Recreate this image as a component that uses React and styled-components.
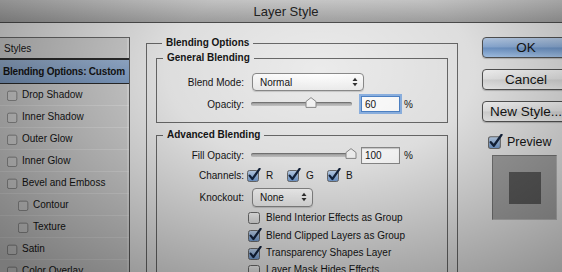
import React from "react";
import styled, { createGlobalStyle } from "styled-components";

const GlobalStyle = createGlobalStyle`
  html, body { margin: 0; padding: 0; }
  body {
    width: 562px;
    height: 272px;
    overflow: hidden;
    background: #8a8a8a;
    font-family: "Liberation Sans", Arial, sans-serif;
    font-size: 10px;
    color: #151515;
  }
`;

const Window = styled.div`
  position: relative;
  width: 562px;
  height: 272px;
  overflow: hidden;
  display: flex;
  flex-direction: column;
  background: #ebebeb;
`;

// lighting falloff of the photographed screen, lies over everything
const Vignette = styled.div`
  position: absolute;
  inset: 0;
  pointer-events: none;
  background: radial-gradient(
    ellipse 440px 270px at 320px 70px,
    rgba(0, 0, 0, 0) 0%,
    rgba(0, 0, 0, 0.06) 35%,
    rgba(0, 0, 0, 0.42) 100%
  );
`;

const TitleBar = styled.div`
  height: 22px;
  flex-shrink: 0;
  border-bottom: 1px solid #4e4e4e;
  background: linear-gradient(#cecece, #a4a4a4);
  display: flex;
  align-items: center;
  justify-content: center;
  padding-left: 10px;
  font-size: 13px;
  color: #222;
`;

const Content = styled.div`
  flex: 1;
  min-height: 0;
  display: flex;
  align-items: flex-start;
  padding-top: 14px;
`;

const Sidebar = styled.div`
  width: 129px;
  flex-shrink: 0;
  height: 300px;
  border-top: 1px solid #6a6a6a;
  border-right: 1px solid #5e5e5e;
  box-shadow: inset -2px 0 0 rgba(255, 255, 255, 0.3);
  background: #d2d2d2;
  white-space: nowrap;
`;

const SidebarHeader = styled.div`
  height: 20px;
  display: flex;
  align-items: center;
  padding-left: 4px;
  border-bottom: 2px solid #2c2c2c;
`;

const StyleRow = styled.div`
  height: ${(p) => (p.$selected ? 23 : 21)}px;
  display: flex;
  align-items: center;
  gap: 3px;
  padding-left: ${(p) => (p.$selected ? 3 : p.$indent ? 18 : 7)}px;
  font-weight: ${(p) => (p.$selected ? "bold" : "normal")};
  letter-spacing: ${(p) => (p.$selected ? "-0.2px" : "0")};
  background: ${(p) =>
    p.$selected ? "linear-gradient(#9bb4d4, #819fc6)" : "transparent"};
  border-bottom: 1px solid
    ${(p) => (p.$selected ? "#2a2a2a" : "rgba(255,255,255,0.3)")};
`;

const Main = styled.div`
  margin-left: 16px;
  width: 312px;
  flex-shrink: 0;
`;

const Group = styled.fieldset`
  margin: ${(p) => p.$margin || "0"};
  min-width: 0;
  border: 1px solid #6a6a6a;
  padding: ${(p) => p.$pad};
`;

const Legend = styled.legend`
  font-weight: bold;
  font-size: 10px;
  line-height: 12px;
  padding: 0 4px;
  margin-left: ${(p) => p.$indent}px;
`;

const FieldRow = styled.div`
  display: grid;
  grid-template-columns: 87px auto;
  column-gap: 7px;
  align-items: center;
  height: ${(p) => p.$h}px;
`;

const FieldLabel = styled.span`
  text-align: right;
`;

const Controls = styled.div`
  display: flex;
  align-items: center;
`;

const Select = styled.div`
  box-sizing: border-box;
  width: ${(p) => p.$w}px;
  height: ${(p) => p.$h || 18}px;
  margin-left: 1px;
  display: flex;
  align-items: center;
  justify-content: space-between;
  padding: 0 5px 0 7px;
  border: 1px solid #8a8a8a;
  border-radius: 4px;
  background: linear-gradient(#ffffff, #ededed);
  box-shadow: 0 1px 1px rgba(0, 0, 0, 0.15);
`;

const Track = styled.div`
  position: relative;
  width: 101px;
  height: 4px;
  border-radius: 2px;
  background: linear-gradient(#9c9c9c, #c8c8c8);
  box-shadow: inset 0 1px 1px rgba(0, 0, 0, 0.3);
`;

const Thumb = styled.svg`
  position: absolute;
  top: -5px;
`;

const NumberBox = styled.div`
  box-sizing: border-box;
  width: 39px;
  height: ${(p) => (p.$focused ? 16 : 17)}px;
  margin-left: 9px;
  padding-left: 3px;
  display: flex;
  align-items: center;
  background: #fff;
  border: 1px solid ${(p) => (p.$focused ? "#4f84c8" : "#8c8c8c")};
  box-shadow: ${(p) =>
    p.$focused
      ? "0 0 0 2px rgba(110, 160, 225, 0.75)"
      : "inset 0 1px 1px rgba(0,0,0,0.2)"};
`;

const Percent = styled.span`
  margin-left: 4px;
`;

const Channel = styled.label`
  width: 40px;
  display: flex;
  align-items: center;
  gap: 5px;
  margin-left: ${(p) => (p.$first ? -4 : 0)}px;
`;

const CheckRow = styled.div`
  height: ${(p) => p.$h}px;
  display: flex;
  align-items: center;
  gap: 4px;
  padding-left: 91px;
  white-space: nowrap;
`;

const Side = styled.div`
  margin-left: 24px;
  width: 88px;
  flex-shrink: 0;
  display: flex;
  flex-direction: column;
`;

const Button = styled.button`
  box-sizing: border-box;
  width: 88px;
  height: 21px;
  margin: 0 0 11px 0;
  padding: 0;
  border: 1px solid #555;
  border-radius: 4px;
  font-family: inherit;
  font-size: 13.5px;
  color: #151515;
  white-space: nowrap;
  background: ${(p) =>
    p.$primary
      ? "linear-gradient(#bcd2ee 0%, #8eb0dc 48%, #7199cd 52%, #a9c9ef 100%)"
      : "linear-gradient(#fdfdfd 0%, #ececec 48%, #dddddd 52%, #f3f3f3 100%)"};
  box-shadow: 0 1px 1px rgba(0, 0, 0, 0.2);
`;

const PreviewRow = styled.label`
  display: flex;
  align-items: center;
  gap: 4px;
  margin: 2px 0 0 6px;
  height: 13px;
  font-size: 12.5px;
`;

const PreviewBox = styled.div`
  box-sizing: border-box;
  width: 65px;
  height: 65px;
  margin: 7px 0 0 10px;
  display: flex;
  align-items: center;
  justify-content: center;
  background: #a4a4a4;
  border: 1px solid #777;
  border-right-color: #bbb;
  border-bottom-color: #bbb;
`;

const Swatch = styled.div`
  width: 32px;
  height: 32px;
  background: #5c5c5c;
`;

const Checkbox = ({ checked, size = 11, soft }) => (
  <svg width={size + 3} height={size + 3} viewBox="0 0 14 14">
    <defs>
      <linearGradient id="cbOn" x1="0" y1="0" x2="0" y2="1">
        <stop offset="0" stopColor="#c3d8f2" />
        <stop offset="1" stopColor="#6f99cf" />
      </linearGradient>
      <linearGradient id="cbOff" x1="0" y1="0" x2="0" y2="1">
        <stop offset="0" stopColor="#fafafa" />
        <stop offset="1" stopColor="#dcdcdc" />
      </linearGradient>
    </defs>
    <rect
      x="0.5"
      y="2.5"
      width="11"
      height="11"
      rx="2"
      fill={checked ? "url(#cbOn)" : soft ? "rgba(255,255,255,0.2)" : "url(#cbOff)"}
      stroke={soft ? "#858585" : "#6e6e6e"}
    />
    {checked && (
      <path
        d="M2.6 7.6 L5.4 11 L12.6 0.8"
        fill="none"
        stroke="#13233d"
        strokeWidth="2.2"
        strokeLinecap="round"
        strokeLinejoin="round"
      />
    )}
  </svg>
);

const Arrows = () => (
  <svg width="6" height="10" viewBox="0 0 6 10">
    <path d="M0.5 4 L3 0.8 L5.5 4 Z M0.5 6 L3 9.2 L5.5 6 Z" fill="#333" />
  </svg>
);

const Slider = ({ value }) => (
  <Track>
    <Thumb
      width="12"
      height="11"
      viewBox="0 0 12 11"
      style={{ left: `calc(${value}% - 7px)` }}
    >
      <path
        d="M1 4.5 L6 0.6 L11 4.5 L11 10.4 L1 10.4 Z"
        fill="#f7f7f7"
        stroke="#8a8a8a"
      />
    </Thumb>
  </Track>
);

const styleItems = [
  { name: "Drop Shadow" },
  { name: "Inner Shadow" },
  { name: "Outer Glow" },
  { name: "Inner Glow" },
  { name: "Bevel and Emboss" },
  { name: "Contour", indent: true },
  { name: "Texture", indent: true },
  { name: "Satin" },
  { name: "Color Overlay" },
];

const options = [
  { label: "Blend Interior Effects as Group", checked: false, h: 18 },
  { label: "Blend Clipped Layers as Group", checked: true, h: 18 },
  { label: "Transparency Shapes Layer", checked: true, h: 17 },
  { label: "Layer Mask Hides Effects", checked: false, h: 17 },
];

export default function App() {
  return (
    <Window>
      <GlobalStyle />
      <TitleBar>Layer Style</TitleBar>
      <Content>
        <Sidebar>
          <SidebarHeader>Styles</SidebarHeader>
          <StyleRow $selected>Blending Options: Custom</StyleRow>
          {styleItems.map((item) => (
            <StyleRow key={item.name} $indent={item.indent}>
              <Checkbox size={9} soft />
              {item.name}
            </StyleRow>
          ))}
        </Sidebar>

        <Main>
          <Group $pad="3px 9px 0 9px">
            <Legend $indent={6}>Blending Options</Legend>
            <Group $pad="7px 0 7px 0">
              <Legend $indent={6}>General Blending</Legend>
              <FieldRow $h={22}>
                <FieldLabel>Blend Mode:</FieldLabel>
                <Controls>
                  <Select $w={112}>
                    Normal
                    <Arrows />
                  </Select>
                </Controls>
              </FieldRow>
              <FieldRow $h={22}>
                <FieldLabel>Opacity:</FieldLabel>
                <Controls>
                  <Slider value={60} />
                  <NumberBox $focused>60</NumberBox>
                  <Percent>%</Percent>
                </Controls>
              </FieldRow>
            </Group>

            <Group $pad="5px 0 10px 0" $margin="6px 0 0 0">
              <Legend $indent={6}>Advanced Blending</Legend>
              <FieldRow $h={18}>
                <FieldLabel>Fill Opacity:</FieldLabel>
                <Controls>
                  <Slider value={100} />
                  <NumberBox>100</NumberBox>
                  <Percent>%</Percent>
                </Controls>
              </FieldRow>
              <FieldRow $h={22}>
                <FieldLabel>Channels:</FieldLabel>
                <Controls>
                  <Channel $first>
                    <Checkbox checked />R
                  </Channel>
                  <Channel>
                    <Checkbox checked />G
                  </Channel>
                  <Channel>
                    <Checkbox checked />B
                  </Channel>
                </Controls>
              </FieldRow>
              <FieldRow $h={22}>
                <FieldLabel>Knockout:</FieldLabel>
                <Controls>
                  <Select $w={61} $h={19}>
                    None
                    <Arrows />
                  </Select>
                </Controls>
              </FieldRow>
              {options.map((o) => (
                <CheckRow key={o.label} $h={o.h}>
                  <Checkbox checked={o.checked} />
                  {o.label}
                </CheckRow>
              ))}
            </Group>
          </Group>
        </Main>

        <Side>
          <Button $primary>OK</Button>
          <Button>Cancel</Button>
          <Button>New Style...</Button>
          <PreviewRow>
            <Checkbox checked size={12} />
            Preview
          </PreviewRow>
          <PreviewBox>
            <Swatch />
          </PreviewBox>
        </Side>
      </Content>
      <Vignette />
    </Window>
  );
}
